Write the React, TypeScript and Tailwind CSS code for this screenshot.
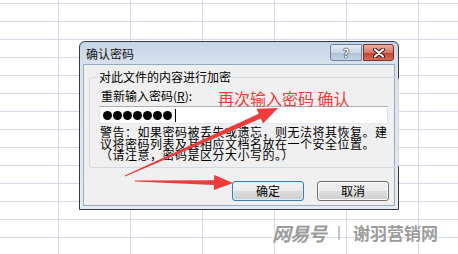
import React from "react";

type P = [number, number];

// tapering annotation arrow: thin tail, thicker neck, triangular head
function arrowPoints(s: P, t: P, headLen: number, headHalf: number, tail: number, neck: number) {
  const dx = t[0] - s[0];
  const dy = t[1] - s[1];
  const len = Math.hypot(dx, dy);
  const ux = dx / len;
  const uy = dy / len;
  const nx = -uy;
  const ny = ux;
  const hx = t[0] - ux * headLen;
  const hy = t[1] - uy * headLen;
  const pts: P[] = [
    [s[0] + nx * tail, s[1] + ny * tail],
    [hx + nx * neck, hy + ny * neck],
    [hx + nx * headHalf, hy + ny * headHalf],
    t,
    [hx - nx * headHalf, hy - ny * headHalf],
    [hx - nx * neck, hy - ny * neck],
    [s[0] - nx * tail, s[1] - ny * tail],
  ];
  return pts.map((p) => `${p[0].toFixed(1)},${p[1].toFixed(1)}`).join(" ");
}

const dots = [0, 1, 2, 3, 4, 5, 6];

const App: React.FC = () => {
  return (
    <div className="relative w-[458px] h-[254px] overflow-hidden bg-white font-['Noto_Sans_CJK_SC','Noto_Sans',sans-serif] text-black [background-image:linear-gradient(to_right,#d5dbe5_1px,transparent_1px),linear-gradient(to_bottom,#d5dbe5_1px,transparent_1px)] [background-size:72px_18px] [background-position:58px_3px]">
      <div className="pl-[79px] pt-[41px]">
        {/* Dialog window */}
        <div className="flex flex-col w-[320px] h-[169px] rounded-t-[6px] border border-[#2f3b48] bg-[linear-gradient(#c6d4e5,#d8e2ee_22px,#e4ebf3)] px-[3px] pb-[3px]">
          {/* Title bar */}
          <div className="flex justify-between h-[22px]">
            <span className="pl-[3px] pt-[6px] text-[12px] leading-[12px] text-[#111]">确认密码</span>
            <div className="flex mt-[2px] mr-[1px] h-[17px]">
              <div className="w-[32px] h-[17px] rounded-l-[3px] border border-[#6f8099] bg-[linear-gradient(#e4ecf5,#c9d7e8_50%,#aebfd6_51%,#c3d3e6)] flex items-center justify-center">
                <span className="text-[12px] leading-[12px] font-bold text-white [text-shadow:0_0_1px_#222,0_0_1px_#222,0_0_1px_#222]">?</span>
              </div>
              <div className="w-[31px] h-[17px] ml-[1px] rounded-r-[3px] border border-[#7c3129] bg-[linear-gradient(#eab0a4,#d97765_50%,#c2402f_51%,#d86b55)] flex items-center justify-center">
                <svg width="14" height="10" viewBox="0 0 14 10">
                  <path d="M3 1.5 L11 8.5 M11 1.5 L3 8.5" stroke="#3a1410" strokeWidth="4" strokeLinecap="round" />
                  <path d="M3 1.5 L11 8.5 M11 1.5 L3 8.5" stroke="#fff" strokeWidth="2.2" strokeLinecap="round" />
                </svg>
              </div>
            </div>
          </div>

          {/* Client area */}
          <div className="h-[142px] border border-[#9aabbf] bg-[#f0f0f0] pl-[5px] pr-[4px] pt-[6px]">
            <fieldset className="border border-[#d3dbe2] rounded-[3px] pl-[9px] pr-[10px] pb-[6px]">
              <legend className="ml-[-2px] px-[2px] text-[12px] leading-[12px]">对此文件的内容进行加密</legend>
              <div className="mt-[7px] pl-[2px] text-[12px] leading-[12px]">
                重新输入密码(<span className="underline">R</span>):
              </div>
              <div className="mt-[4px] h-[18px] border border-[#abadb3] border-l-[#e2e3ea] border-r-[#dbdfe6] border-b-[#e3e9ef] bg-white flex items-center pl-[3px] gap-[1px]">
                {dots.map((d) => (
                  <div key={d} className="w-[9px] h-[9px] rounded-full bg-black" />
                ))}
                <div className="ml-[2px] w-[1px] h-[13px] bg-black" />
              </div>
              <p className="mt-[2px] pl-[1px] text-[12px] leading-[11.5px] tracking-[0.5px] whitespace-nowrap">
                警告：如果密码被丢失或遗忘，则无法将其恢复。建
                <br />
                议将密码列表及其相应文档名放在一个安全位置。
                <br />
                （请注意，密码是区分大小写的。）
              </p>
            </fieldset>

            <div className="flex justify-end gap-[13px] mt-[13px] mr-[1px]">
              <button className="w-[72px] h-[20px] rounded-[3px] border border-[#3c7fb1] bg-[linear-gradient(#f2f2f2,#ebebeb_50%,#dddddd_51%,#cfcfcf)] text-[12px] leading-[12px] shadow-[inset_0_0_0_1px_#d6eefa]">
                确定
              </button>
              <button className="w-[72px] h-[20px] rounded-[3px] border border-[#707070] bg-[linear-gradient(#f2f2f2,#ebebeb_50%,#dddddd_51%,#cfcfcf)] text-[12px] leading-[12px] shadow-[inset_0_0_0_1px_#fcfcfc]">
                取消
              </button>
            </div>
          </div>
        </div>
      </div>

      {/* Red annotation */}
      <div className="absolute left-[218px] top-[89px] text-[16px] leading-[18px] text-[#ec3d3b] whitespace-nowrap">
        再次输入密码 确认
      </div>
      <svg className="absolute left-0 top-0" width="458" height="254" viewBox="0 0 458 254">
        <polygon points={arrowPoints([125, 176], [278, 108], 20, 8, 0.5, 2.6)} fill="#ee3b3b" />
        <polygon points={arrowPoints([135, 181], [233, 183], 19, 7.5, 0.6, 2.4)} fill="#ee3b3b" />
      </svg>

      {/* Watermark */}
      <div className="absolute left-[272px] top-[222px] flex items-center whitespace-nowrap text-[#9c9c9c] [text-shadow:0_0_2px_#fff,0_0_2px_#fff]">
        <span className="text-[19px] leading-[22px] font-bold italic tracking-[-1px]">网易号</span>
        <span className="ml-[12px] w-[2px] h-[14px] bg-[#c4c4c4]" />
        <span className="ml-[13px] text-[17px] leading-[22px] font-bold">谢羽营销网</span>
      </div>
    </div>
  );
};

export default App;
